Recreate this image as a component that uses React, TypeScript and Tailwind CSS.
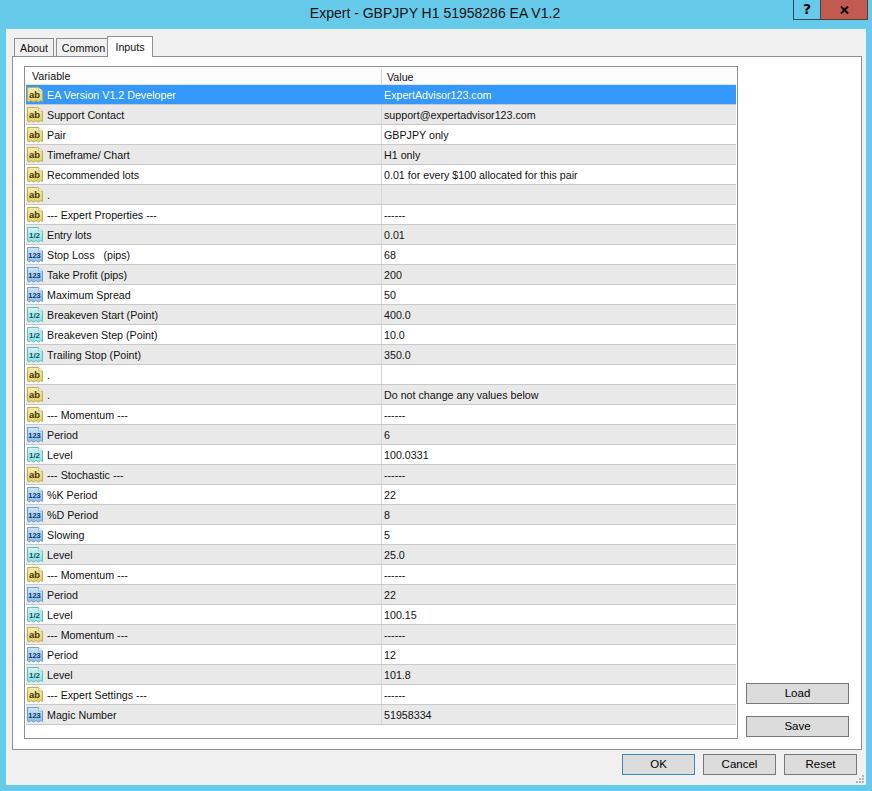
const FONT = 'font-["Liberation_Sans",Arial,sans-serif]';

type Kind = 'ab' | 'int' | 'dbl';

const rows: [Kind, string, string][] = [
  ['ab', 'EA Version V1.2 Developer', 'ExpertAdvisor123.com'],
  ['ab', 'Support Contact', 'support@expertadvisor123.com'],
  ['ab', 'Pair', 'GBPJPY only'],
  ['ab', 'Timeframe/ Chart', 'H1 only'],
  ['ab', 'Recommended lots', '0.01 for every $100 allocated for this pair'],
  ['ab', '.', ''],
  ['ab', '--- Expert Properties ---', '------'],
  ['dbl', 'Entry lots', '0.01'],
  ['int', 'Stop Loss   (pips)', '68'],
  ['int', 'Take Profit (pips)', '200'],
  ['int', 'Maximum Spread', '50'],
  ['dbl', 'Breakeven Start (Point)', '400.0'],
  ['dbl', 'Breakeven Step (Point)', '10.0'],
  ['dbl', 'Trailing Stop (Point)', '350.0'],
  ['ab', '.', ''],
  ['ab', '.', 'Do not change any values below'],
  ['ab', '--- Momentum ---', '------'],
  ['int', 'Period', '6'],
  ['dbl', 'Level', '100.0331'],
  ['ab', '--- Stochastic ---', '------'],
  ['int', '%K Period', '22'],
  ['int', '%D Period', '8'],
  ['int', 'Slowing', '5'],
  ['dbl', 'Level', '25.0'],
  ['ab', '--- Momentum ---', '------'],
  ['int', 'Period', '22'],
  ['dbl', 'Level', '100.15'],
  ['ab', '--- Momentum ---', '------'],
  ['int', 'Period', '12'],
  ['dbl', 'Level', '101.8'],
  ['ab', '--- Expert Settings ---', '------'],
  ['int', 'Magic Number', '51958334'],
];

const iconStyle = {
  ab: { top: '#f6eeb0', bottom: '#e3cf66', edge: '#c4ad4c', ink: '#3f3405', label: 'ab', size: 9.5 },
  int: { top: '#cfe6fa', bottom: '#86bbe8', edge: '#6a9fd2', ink: '#0c3566', label: '123', size: 7.5 },
  dbl: { top: '#d4f4f4', bottom: '#8adfe2', edge: '#67bcc4', ink: '#0f5560', label: '1/2', size: 8 },
};

const TypeIcon = ({ kind }: { kind: Kind }) => {
  const s = iconStyle[kind];
  return (
    <svg width="16" height="16" viewBox="0 0 16 16" className="shrink-0">
      <defs>
        <linearGradient id={`doc-${kind}`} x1="0" y1="0" x2="0" y2="1">
          <stop offset="0" stopColor={s.top} />
          <stop offset="1" stopColor={s.bottom} />
        </linearGradient>
      </defs>
      <path
        d="M0.5 0.5H11.5L15.5 4V14.5L13.5 13.5L11.5 15L9 13.5L6.5 15L4 13.5L2 15L0.5 14Z"
        fill={`url(#doc-${kind})`}
        stroke={s.edge}
      />
      <path d="M11.5 0.5V4H15.5" fill="#ffffff" stroke={s.edge} strokeWidth="0.6" />
      <text
        x="7.5"
        y="11"
        textAnchor="middle"
        fontSize={s.size}
        fontWeight="700"
        fontFamily="Liberation Sans, sans-serif"
        fill={s.ink}
      >
        {s.label}
      </text>
    </svg>
  );
};

const DialogButton = ({ label, className = '' }: { label: string; className?: string }) => (
  <button className={`h-[21px] border bg-[#dcdcdc] text-[11.5px] text-black ${className}`}>{label}</button>
);

const App = () => {
  return (
    <div className={`flex h-[791px] w-[872px] flex-col bg-[#66cbea] px-[6px] pb-[6px] text-[10.7px] text-[#111] ${FONT}`}>
      {/* title bar */}
      <div className="flex h-[29px] shrink-0 items-start">
        <div className="w-[71px]" />
        <div className="flex-1 pt-[4px] text-center text-[14px] leading-[18px] text-[#111]">
          Expert - GBPJPY H1 51958286 EA V1.2
        </div>
        <div className="-mr-[2px] flex h-[20px] w-[75px] font-['DejaVu_Sans'] font-bold text-black">
          <div className="flex w-[28px] items-center justify-center border border-t-0 border-[#2d4a58] text-[14px]">?</div>
          <div className="flex flex-1 items-center justify-center border border-l-0 border-t-0 border-[#5b3733] bg-[#c25a50]">
            <svg width="9" height="8" viewBox="0 0 9 8">
              <path d="M1 0.5L8 7.5M8 0.5L1 7.5" fill="none" stroke="#000" strokeWidth="2" />
            </svg>
          </div>
        </div>
      </div>

      {/* client area */}
      <div className="relative flex flex-1 flex-col bg-[#f0f0f0] pl-[6px] pr-[4px]">
        <div className="relative z-10 flex h-[27px] items-end pl-[2px]">
          <div className="flex h-[18px] w-[40px] items-center justify-center border border-b-0 border-[#8f8f96] bg-[#f0f0f0] pt-[1px]">
            About
          </div>
          <div className="ml-[2px] flex h-[18px] w-[52px] items-center justify-center border border-b-0 border-[#8f8f96] bg-[#f0f0f0] pl-[3px] pt-[1px]">
            Common
          </div>
          <div className="-mb-[1px] -ml-[1px] flex h-[21px] w-[46px] items-start justify-center border border-b-0 border-[#8f8f96] bg-white pt-[2px]">
            Inputs
          </div>
        </div>

        <div className="flex h-[694px] shrink-0 border border-[#8f8f96] bg-white pb-[10px] pl-[11px] pr-[11px] pt-[9px]">
          {/* parameter list */}
          <div className="flex h-[673px] w-[714px] shrink-0 flex-col border border-[#8f8f96] p-[1px]">
            <div className="flex h-[17px] shrink-0 items-center border-b border-[#e2e2e2] bg-[#fcfcfc] pl-[6px] pt-[1px]">
              <div className="w-[349px]">Variable</div>
              <div className="h-full border-l border-[#d6d6d6] pl-[5px] leading-[16px]">Value</div>
            </div>
            {rows.map(([kind, name, value], i) => {
              const selected = i === 0;
              const bg = selected ? 'bg-[#3399ff] text-white' : i % 2 ? 'bg-[#e9e9e9]' : 'bg-white';
              return (
                <div
                  key={i}
                  className={`flex h-[20px] shrink-0 items-center border-b border-[#c9c9c9] ${bg}`}
                >
                  <div className="flex w-[355px] items-center pl-[1px] pt-[1px]">
                    <TypeIcon kind={kind} />
                    <span className="ml-[4px] whitespace-pre">{name}</span>
                  </div>
                  <div className={`h-full w-[1px] ${selected ? 'bg-[#3399ff]' : 'bg-[#d6d6d6]'}`} />
                  <span className="ml-[2px] pt-[1px]">{value}</span>
                </div>
              );
            })}
          </div>

          {/* side buttons */}
          <div className="flex flex-1 flex-col items-center justify-end gap-[12px] pb-[2px] pl-[7px]">
            <DialogButton label="Load" className="w-[103px] border-[#777]" />
            <DialogButton label="Save" className="w-[103px] border-[#777]" />
          </div>
        </div>

        {/* footer */}
        <div className="flex flex-1 items-start justify-end gap-[8px] pr-[5px] pt-[4px]">
          <DialogButton label="OK" className="w-[73px] border-[#3a87b8]" />
          <DialogButton label="Cancel" className="w-[73px] border-[#777]" />
          <DialogButton label="Reset" className="w-[73px] border-[#777]" />
        </div>

        {/* size grip */}
        <svg width="10" height="10" viewBox="0 0 10 10" className="absolute bottom-[1px] right-[1px]">
          <g fill="#b5b5b5">
            <rect x="7" y="1" width="2" height="2" />
            <rect x="4" y="4" width="2" height="2" />
            <rect x="7" y="4" width="2" height="2" />
            <rect x="1" y="7" width="2" height="2" />
            <rect x="4" y="7" width="2" height="2" />
            <rect x="7" y="7" width="2" height="2" />
          </g>
        </svg>
      </div>
    </div>
  );
};

export default App;
